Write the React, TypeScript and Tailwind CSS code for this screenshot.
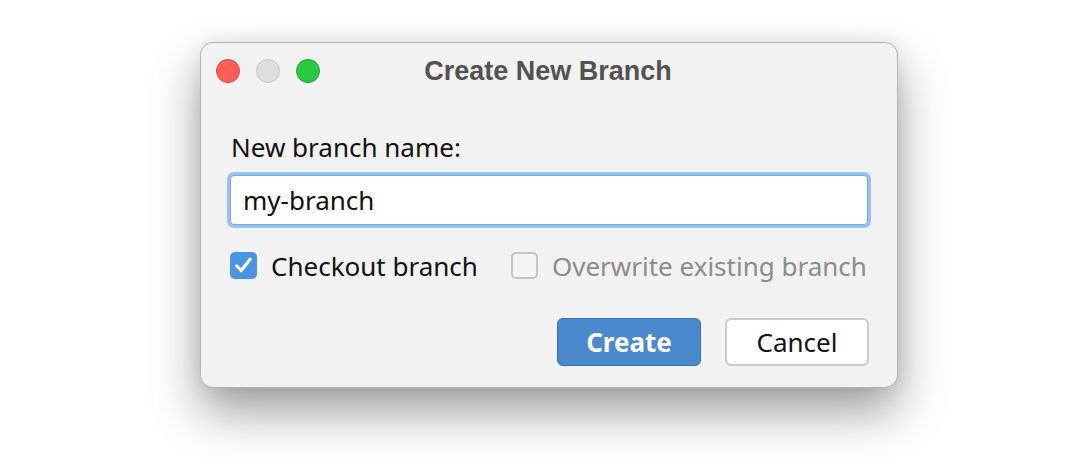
import React from "react";

const sans = { fontFamily: '"Noto Sans", "Open Sans", sans-serif' };
const title = { fontFamily: '"Liberation Sans", Arial, sans-serif' };

function TrafficLights() {
  return (
    <div className="flex items-center gap-4">
      <span className="block w-6 h-6 rounded-full bg-[#fe5f57] border border-[#e14942]" />
      <span className="block w-6 h-6 rounded-full bg-[#dedede] border border-[#c9c9c9]" />
      <span className="block w-6 h-6 rounded-full bg-[#28c840] border border-[#1aab29]" />
    </div>
  );
}

function CheckBox({ checked }: { checked: boolean }) {
  if (checked) {
    return (
      <span className="flex items-center justify-center w-[27px] h-[27px] rounded-[5px] bg-[#4b94e1]">
        <svg width="23" height="23" viewBox="0 0 20 20" fill="none">
          <path d="M4 10.4 L8 14.4 L15.8 4.6" stroke="white" strokeWidth="2.8" strokeLinecap="round" strokeLinejoin="round" />
        </svg>
      </span>
    );
  }
  return <span className="block w-[27px] h-[27px] rounded-[5px] bg-[#f4f4f4] border-2 border-[#c4c4c4]" />;
}

export default function App() {
  return (
    <div className="w-[1078px] h-[464px] bg-white overflow-hidden pl-[200px] pt-[42px]" style={sans}>
      <div className="w-[698px] h-[346px] rounded-[13px] bg-[#f2f2f2] border border-[#b3b3b3] shadow-[0_24px_48px_rgba(0,0,0,0.38),0_0_18px_rgba(0,0,0,0.08)] flex flex-col">
        {/* title bar */}
        <div className="relative h-[56px] flex items-center pl-[15px]">
          <TrafficLights />
          <div className="absolute inset-0 flex items-center justify-center">
            <span className="text-[27px] font-bold text-[#525252] pr-[2px]" style={title}>
              Create New Branch
            </span>
          </div>
        </div>

        {/* form */}
        <div className="px-[28px] pt-[33px] flex flex-col">
          <label className="ml-[2px] text-[26px] leading-[30px] text-[#111]">New branch name:</label>
          <div className="mt-[13px] mx-[1px] rounded-[4px] border border-[#7fa7dc] shadow-[0_0_0_3px_#98c2f3] bg-white h-[50px] flex items-center px-[12px]">
            <span className="text-[26px] leading-[30px] text-[#111]">my-branch</span>
          </div>

          <div className="mt-[27px] flex items-center ml-[1px] h-[27px]">
            <CheckBox checked />
            <span className="ml-[14px] text-[26px] leading-[30px] text-[#111]">Checkout branch</span>
            <span className="ml-[33px]">
              <CheckBox checked={false} />
            </span>
            <span className="ml-[14px] text-[26px] leading-[30px] text-[#8c8c8c]">Overwrite existing branch</span>
          </div>

          <div className="mt-[39px] flex justify-end gap-[24px]">
            <button className="w-[144px] h-[48px] rounded-[6px] bg-[#4b89cd] border border-[#3a6fb3] text-white text-[26px] leading-[30px] font-bold">
              Create
            </button>
            <button className="w-[144px] h-[48px] rounded-[6px] bg-white border-2 border-[#cbcbcb] text-[#111] text-[26px] leading-[30px]">
              Cancel
            </button>
          </div>
        </div>
      </div>
    </div>
  );
}
